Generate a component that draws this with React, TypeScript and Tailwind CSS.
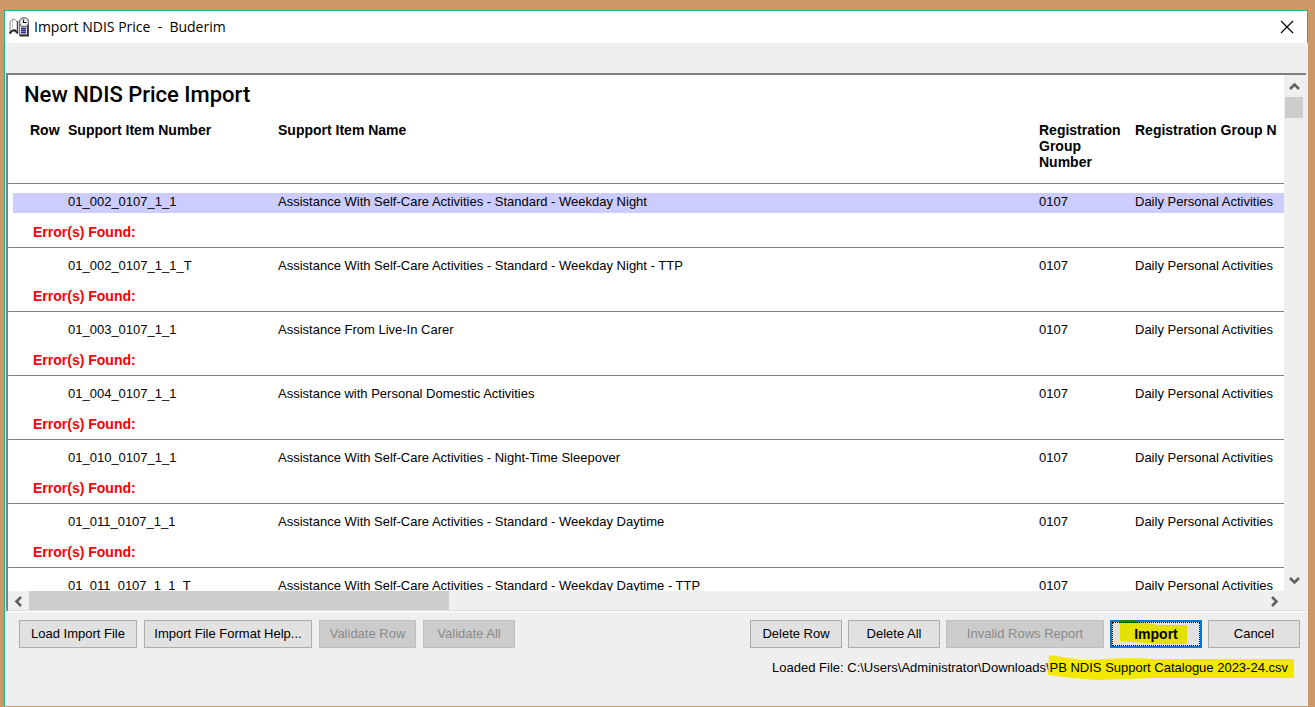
import React, { useState } from 'react';
import clsx from 'clsx';

interface SupportItem {
  number: string;
  name: string;
}

const GROUP_NUMBER = '0107';
const GROUP_NAME = 'Daily Personal Activities';

const items: SupportItem[] = [
  { number: '01_002_0107_1_1', name: 'Assistance With Self-Care Activities - Standard - Weekday Night' },
  { number: '01_002_0107_1_1_T', name: 'Assistance With Self-Care Activities - Standard - Weekday Night - TTP' },
  { number: '01_003_0107_1_1', name: 'Assistance From Live-In Carer' },
  { number: '01_004_0107_1_1', name: 'Assistance with Personal Domestic Activities' },
  { number: '01_010_0107_1_1', name: 'Assistance With Self-Care Activities - Night-Time Sleepover' },
  { number: '01_011_0107_1_1', name: 'Assistance With Self-Care Activities - Standard - Weekday Daytime' },
  { number: '01_011_0107_1_1_T', name: 'Assistance With Self-Care Activities - Standard - Weekday Daytime - TTP' },
];

const AppIcon = () => (
  <svg width="21" height="20" viewBox="0 0 21 20" aria-hidden="true">
    <path d="M1 5 3 2.500h3L8.500 5v10L6 13H3.500L1 16z" fill="#fff" stroke="#8a8a8a" />
    <path d="M.500 16.500 3.500 13.500H6L9 16.500" fill="none" stroke="#222" strokeWidth="1.800" />
    <path d="M3.500 3v10" stroke="#c4c4c4" />
    <path d="M8.500 4v12" stroke="#444" strokeWidth="1.500" />
    <path d="M10.500 7h7l1 1v10h-8z" fill="#dcdce4" stroke="#777" />
    <path d="M19 7v11.500h-8.500" fill="none" stroke="#333" strokeWidth="1.800" />
    <path d="M12 11.500h5M12 13.500h5M12 15.500h5" stroke="#23239c" strokeWidth="1.400" />
    <circle cx="15" cy="5.200" r="4.500" fill="#f0f0f0" stroke="#777" strokeWidth="1.400" />
    <path d="M14.500 2.500V5.500h3" fill="none" stroke="#111" strokeWidth="1.200" />
  </svg>
);

const chevrons = {
  up: 'M1 8 5.500 3.500 10 8',
  down: 'M1 3 5.500 7.500 10 3',
  left: 'M8 1 3.500 5.500 8 10',
  right: 'M3 1 7.500 5.500 3 10',
};

const ScrollArrow: React.FC<{ dir: keyof typeof chevrons }> = ({ dir }) => (
  <button type="button" aria-label={`Scroll ${dir}`} className="w-5 h-5 shrink-0 flex items-center justify-center">
    <svg width="11" height="11" viewBox="0 0 11 11">
      <path d={chevrons[dir]} fill="none" stroke="#606060" strokeWidth="2.600" />
    </svg>
  </button>
);

const Button: React.FC<{ className?: string; disabled?: boolean; children: React.ReactNode }> = ({
  className,
  disabled,
  children,
}) => (
  <button
    type="button"
    disabled={disabled}
    className={clsx(
      'h-7 shrink-0 border whitespace-nowrap',
      disabled ? 'bg-[#cccccc] border-[#bfbfbf] text-[#8a8a8a]' : 'bg-[#e1e1e1] border-[#adadad]',
      className,
    )}
  >
    {children}
  </button>
);

export default function App() {
  const [selected, setSelected] = useState(0);

  return (
    <div className="h-screen bg-[#cc9966] pt-[10px] pl-1 pr-[7px] pb-px overflow-hidden text-black">
      <div className="h-full flex flex-col bg-[#efefef] border-t border-l border-[#1ab394] font-['Liberation_Sans',Arial,sans-serif] text-[13px]">
        <header className="h-8 shrink-0 bg-white border-r border-[#1ab394] flex items-center pl-1 pr-[13px]">
          <AppIcon />
          <h1 className="ml-1 flex-1 font-['Open_Sans',sans-serif] text-sm whitespace-pre">Import NDIS Price  -  Buderim</h1>
          <button type="button" aria-label="Close">
            <svg width="14" height="14" viewBox="0 0 14 14">
              <path d="M1 1 13 13M13 1 1 13" stroke="#000" strokeWidth="1.200" />
            </svg>
          </button>
        </header>

        <div className="h-[30px] shrink-0" />

        <main className="flex-1 min-h-0 flex flex-col ml-px mr-[2px] border-t-2 border-l-2 border-[#808080]">
          <div className="flex-1 min-h-0 flex">
            <div className="flex-1 min-w-0 bg-white overflow-hidden">
              <h2 className="pt-1 pl-4 h-[46px] font-[Roboto,sans-serif] text-[22px] leading-8 font-medium">New NDIS Price Import</h2>
              <table className="w-full table-fixed border-collapse text-left">
                <colgroup>
                  <col className="w-[60px]" />
                  <col className="w-[210px]" />
                  <col />
                  <col className="w-[96px]" />
                  <col className="w-[149px]" />
                </colgroup>
                <thead>
                  <tr className="h-[62px] align-top text-sm font-bold leading-4 whitespace-nowrap">
                    <th className="pl-[22px] pt-px">Row</th>
                    <th className="pt-px">Support Item Number</th>
                    <th className="pt-px">Support Item Name</th>
                    <th className="pt-px pr-2 whitespace-normal">Registration Group Number</th>
                    <th className="pt-px">Registration Group N</th>
                  </tr>
                </thead>
                {items.map((item, i) => {
                  const cell = clsx('h-5 leading-[18px]', i === selected && 'bg-[#ccccff]');
                  return (
                    <tbody key={item.number} onClick={() => setSelected(i)} className="border-t border-[#808080]">
                      <tr className="h-[30px] align-bottom whitespace-nowrap">
                        <td><div className={clsx('ml-[5px]', cell)} /></td>
                        <td><div className={cell}>{item.number}</div></td>
                        <td><div className={cell}>{item.name}</div></td>
                        <td><div className={cell}>{GROUP_NUMBER}</div></td>
                        <td><div className={cell}>{GROUP_NAME}</div></td>
                      </tr>
                      <tr className="h-[34px] align-top">
                        <td colSpan={5} className="pl-[25px] pt-[9px] text-sm leading-5 font-bold text-[#ff0000]">Error(s) Found:</td>
                      </tr>
                    </tbody>
                  );
                })}
              </table>
            </div>
            <div className="w-[22px] shrink-0 flex flex-col py-px">
              <ScrollArrow dir="up" />
              <div className="flex-1 pr-[3px] pl-px pt-px">
                <div className="h-[21px] bg-[#cdcdcd]" />
              </div>
              <ScrollArrow dir="down" />
            </div>
          </div>
          <div className="h-5 shrink-0 flex border-b border-[#dcdcdc] pr-[22px]">
            <ScrollArrow dir="left" />
            <div className="flex-1 pl-px">
              <div className="h-[19px] w-[34%] bg-[#cdcdcd]" />
            </div>
            <ScrollArrow dir="right" />
          </div>
        </main>

        <footer className="shrink-0 h-[95px] pt-2 border-t border-white pl-[14px] pr-2">
          <div className="flex gap-[7px]">
            <Button className="w-[118px]">Load Import File</Button>
            <Button className="w-[168px]">Import File Format Help...</Button>
            <Button className="w-[97px]" disabled>Validate Row</Button>
            <Button className="w-[92px]" disabled>Validate All</Button>
            <div className="flex-1" />
            <div className="flex gap-[6px]">
              <Button className="w-[92px]">Delete Row</Button>
              <Button className="w-[92px]">Delete All</Button>
              <Button className="w-[158px]" disabled>Invalid Rows Report</Button>
              <button type="button" className="relative w-[92px] h-7 shrink-0 border-2 border-[#0078d7] bg-[#e1e1e1] text-sm font-bold">
                <svg className="absolute left-2 -top-[2px]" width="67" height="24" viewBox="0 0 67 24" aria-hidden="true">
                  <path d="M0 1 22 2 38 5H67V24H38L14 22 0 21z" fill="#e4e000" />
                  <path d="M0 0H14L22 3H0z" fill="#0b8a10" />
                </svg>
                <span className="absolute inset-0 border border-dotted border-black" />
                <span className="relative">Import</span>
              </button>
              <Button className="w-[92px]">Cancel</Button>
            </div>
          </div>
          <p className="mt-2 pr-3 text-right leading-6 whitespace-nowrap">
            Loaded File: C:\Users\Administrator\Downloads\
            <span className="relative">
              <svg className="absolute -left-[2px] -top-[5px] w-[246px] h-[25px]" viewBox="0 0 254 25" preserveAspectRatio="none" aria-hidden="true">
                <path d="M1 0 15 2 35 5 60 4 85 3 110 4 254 4V23H110L80 24 50 25 25 23 0 20z" fill="#f2e800" />
              </svg>
              <span className="relative">PB NDIS Support Catalogue 2023-24.csv</span>
            </span>
          </p>
        </footer>
      </div>
    </div>
  );
}
